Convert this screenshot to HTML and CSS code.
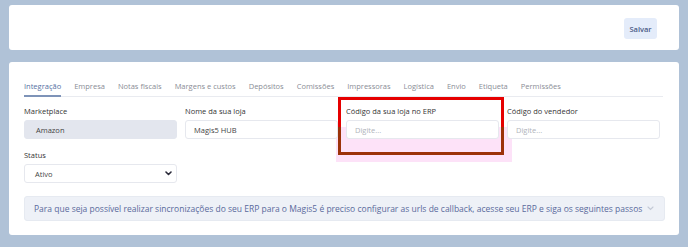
FILE: index.html
```
<!DOCTYPE html>
<html lang="pt-BR">
<head>
  <meta charset="UTF-8" />
  <title>Integração - Amazon</title>
  <link rel="stylesheet" href="styles.css">
</head>
<body>
  <!-- Barra de ações -->
  <div class="card top-card">
    <button class="btn-save">Salvar</button>
  </div>

  <!-- Configurações -->
  <div class="card main-card">
    <div class="tabs">
      <span class="tab active">Integração</span>
      <span class="tab">Empresa</span>
      <span class="tab">Notas fiscais</span>
      <span class="tab">Margens e custos</span>
      <span class="tab">Depósitos</span>
      <span class="tab">Comissões</span>
      <span class="tab">Impressoras</span>
      <span class="tab">Logística</span>
      <span class="tab">Envio</span>
      <span class="tab">Etiqueta</span>
      <span class="tab">Permissões</span>
    </div>

    <div class="form-grid">
      <div class="field">
        <label>Marketplace</label>
        <div class="input disabled">Amazon</div>
      </div>
      <div class="field">
        <label>Nome da sua loja</label>
        <div class="input">Magis5 HUB</div>
      </div>
      <div class="field">
        <label>Código da sua loja no ERP</label>
        <div class="input placeholder">Digite...</div>
      </div>
      <div class="field">
        <label>Código do vendedor</label>
        <div class="input placeholder">Digite...</div>
      </div>
      <div class="field">
        <label>Status</label>
        <div class="input select">
          <span>Ativo</span>
          <svg width="7" height="5" viewBox="0 0 7 5"><path d="M1 1l2.5 2.5L6 1" fill="none" stroke="#2b2b3a" stroke-width="1.6" stroke-linecap="round" stroke-linejoin="round"/></svg>
        </div>
      </div>
    </div>

    <div class="info-box">
      <span>Para que seja possível realizar sincronizações do seu ERP para o Magis5 é preciso configurar as urls de callback, acesse seu ERP e siga os seguintes passos</span>
      <svg width="7" height="5" viewBox="0 0 7 5"><path d="M1 1l2.5 2.5L6 1" fill="none" stroke="#c3c9d6" stroke-width="1.1" stroke-linecap="round"/></svg>
    </div>

    <!-- marcação em destaque -->
    <div class="mark-bg"></div>
    <div class="mark-box"></div>
  </div>
</body>
</html>
```

FILE: styles.css
```
* {
  margin: 0;
  padding: 0;
  box-sizing: border-box;
}
body {
  font-family: 'Open Sans', 'Liberation Sans', sans-serif;
  background: #b0c2d7;
  color: #3a3a3a;
  padding: 5px 9px 0 9px;
  font-size: 7.5px;
}
.card {
  background: #fff;
  border-radius: 3px;
}
/* Top bar */
.top-card {
  height: 45px;
  display: flex;
  align-items: center;
  justify-content: flex-end;
  padding-right: 22px;
}
.btn-save {
  font-family: inherit;
  font-size: 7.5px;
  font-weight: 600;
  color: #4b5b87;
  background: #e4ecfa;
  border: none;
  border-radius: 3px;
  width: 33px;
  height: 21px;
  margin-top: 2px;
}
/* Main card */
.main-card {
  margin-top: 12px;
  height: 173px;
  padding: 16px 16px 0 15px;
  position: relative;
}
.tabs {
  display: flex;
  gap: 13px;
  height: 19px;
  align-items: center;
  border-bottom: 1px solid #e9ebf0;
  color: #8a8d96;
  position: relative;
  z-index: 2;
}
.tab {
  height: 19px;
  line-height: 15px;
  padding-top: 1px;
  white-space: nowrap;
}
.tab.active {
  color: #5672a4;
  border-bottom: 2px solid #7e93b8;
}
/* Form */
.form-grid {
  display: grid;
  grid-template-columns: repeat(4, 153px);
  column-gap: 8px;
  row-gap: 11px;
  margin-top: 9px;
  position: relative;
  z-index: 2;
}
.field label {
  display: block;
  height: 10px;
  line-height: 10px;
  margin-bottom: 4px;
  color: #353535;
}
.input {
  height: 19px;
  border: 1px solid #e6e8ee;
  border-radius: 3px;
  background: #fff;
  padding-left: 8px;
  display: flex;
  align-items: center;
  color: #444;
}
.input.disabled {
  background: #e3e6ee;
  border-color: #e3e6ee;
  padding-left: 11px;
}
.input.placeholder {
  color: #b0b3bb;
}
.input.select {
  justify-content: space-between;
  padding-right: 4px;
  padding-left: 10px;
}
/* Info box */
.info-box {
  margin-top: 13px;
  height: 25px;
  width: 641px;
  background: #eef1f7;
  border: 1px solid #e6eaf1;
  border-radius: 3px;
  display: flex;
  align-items: center;
  justify-content: space-between;
  padding: 0 10px 0 9px;
  color: #5a6a9c;
  font-size: 8.5px;
  white-space: nowrap;
  position: relative;
  z-index: 2;
}
/* Highlight annotation */
.mark-bg {
  position: absolute;
  left: 327px;
  top: 65px;
  width: 176px;
  height: 35px;
  background: #fde2f8;
  z-index: 1;
}
.mark-box {
  position: absolute;
  left: 329px;
  top: 35px;
  width: 166px;
  height: 58px;
  border: 3px solid;
  border-image: linear-gradient(to bottom, #e60000 52%, #9c3209 52%) 1;
  z-index: 3;
}
```
